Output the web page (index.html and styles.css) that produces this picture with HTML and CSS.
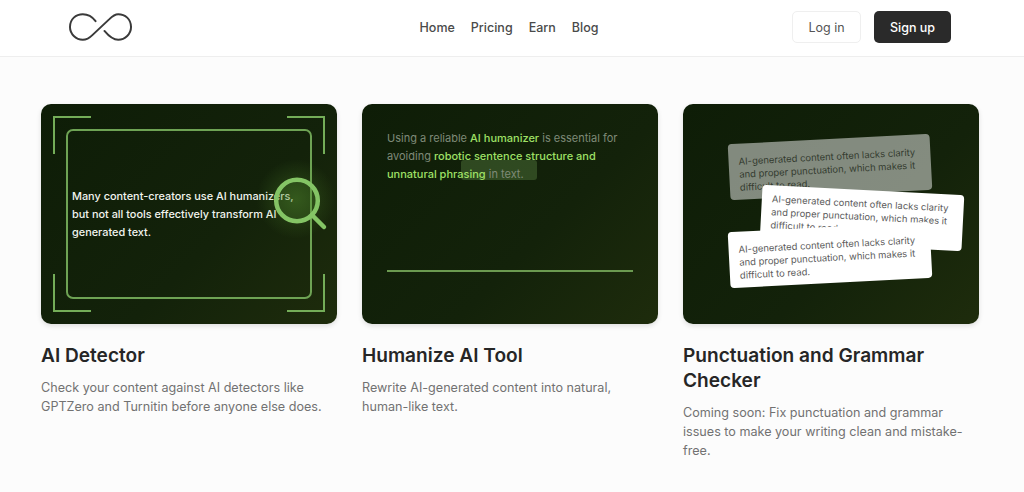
FILE: index.html
```html
<!DOCTYPE html>
<html lang="en">
<head>
<meta charset="utf-8">
<title>Tools</title>
<link rel="stylesheet" href="styles.css">
</head>
<body>
<header class="topbar">
  <a class="logo" href="#" aria-label="Home">
    <svg width="64" height="30" viewBox="0 0 65 30" fill="none" stroke="#3a3a3a" stroke-width="2" stroke-linecap="round" stroke-linejoin="round">
      <path d="M27 9 C24 5 19 2 14 2 C7 2 1 7 1 15 C1 22 7 28 14 28 C18 28 21 26 24 23 L41 7 C44 4 47 2 50 2 C57 2 63 7 63 15 C63 22 57 28 50 28 C45 28 41 25 36 19"/>
    </svg>
  </a>
  <nav class="nav">
    <a href="#">Home</a>
    <a href="#">Pricing</a>
    <a href="#">Earn</a>
    <a href="#">Blog</a>
  </nav>
  <div class="actions">
    <a class="btn btn-ghost" href="#">Log in</a>
    <a class="btn btn-dark" href="#">Sign up</a>
  </div>
</header>
<main class="cards">
  <article class="card">
    <div class="art art-detect">
      <span class="corner tl"></span><span class="corner tr"></span><span class="corner bl"></span><span class="corner br"></span>
      <div class="frame">
        <p class="detect-text">Many content-creators use AI humanizers, but not all tools effectively transform AI generated text.</p>
      </div>
      <span class="glow"></span>
      <svg class="lens" width="60" height="60" viewBox="0 0 60 60" fill="none" stroke="#84c465" stroke-linecap="round">
        <circle cx="25" cy="24.5" r="20.8" fill="#4f8a2e" fill-opacity="0.22" stroke-width="4.5"/>
        <path d="M40 39 L52 51" stroke-width="4.5"/>
      </svg>
    </div>
    <h2>AI Detector</h2>
    <p class="desc">Check your content against AI detectors like GPTZero and Turnitin before anyone else does.</p>
  </article>
  <article class="card">
    <div class="art art-human">
      <span class="mark"></span>
      <p class="human-text">Using a reliable <b>AI humanizer</b> is essential for avoiding <b>robotic sentence structure and unnatural phrasing</b> in text.</p>
      <span class="rule"></span>
    </div>
    <h2>Humanize AI Tool</h2>
    <p class="desc">Rewrite AI-generated content into natural, human-like text.</p>
  </article>
  <article class="card">
    <div class="art art-notes">
      <p class="note note-a">AI-generated content often lacks clarity and proper punctuation, which makes it difficult to read.</p>
      <p class="note note-b">AI-generated content often lacks clarity and proper punctuation, which makes it difficult to read.</p>
      <p class="note note-c">AI-generated content often lacks clarity and proper punctuation, which makes it difficult to read.</p>
    </div>
    <h2>Punctuation and Grammar Checker</h2>
    <p class="desc">Coming soon: Fix punctuation and grammar issues to make your writing clean and mistake-free.</p>
  </article>
</main>
</body>
</html>
```
FILE: styles.css
```css
* { box-sizing: border-box; }
html, body { margin: 0; height: 100%; }
body {
  background: #fcfcfc;
  font-family: Inter, "Liberation Sans", sans-serif;
  color: #262626;
  overflow: hidden;
}
a { text-decoration: none; color: inherit; }

.topbar {
  height: 57px;
  background: #fff;
  border-bottom: 1px solid #eeeeee;
  display: grid;
  grid-template-columns: 1fr auto 1fr;
  align-items: center;
  padding: 0 73px 2px 69px;
}
.logo { display: flex; justify-self: start; margin-top: -1px; }
.nav { display: flex; gap: 16px; font-size: 12.5px; color: #4a4a4a; font-weight: 500; margin-left: -2px; }
.actions { display: flex; gap: 13px; justify-self: end; }
.btn {
  height: 32px;
  display: flex;
  align-items: center;
  justify-content: center;
  border-radius: 5px;
  font-size: 12.5px;
}
.btn-ghost { width: 69px; border: 1px solid #efefef; color: #555; background: #fff; }
.btn-dark { width: 77px; background: #2a2a2a; color: #fff; font-weight: 500; }

.cards {
  display: grid;
  grid-template-columns: repeat(3, 1fr);
  gap: 25px;
  padding: 47px 45px 0 41px;
}
.card h2 {
  margin: 19px 0 0;
  font-size: 19.1px;
  line-height: 25px;
  font-weight: 600;
  color: #262626;
}
.desc {
  margin: 10px 0 0;
  font-size: 12.6px;
  line-height: 19px;
  color: #727272;
}

.art {
  position: relative;
  height: 220px;
  border-radius: 10px;
  overflow: hidden;
  background: linear-gradient(135deg, #0e1d07 0%, #13220a 60%, #1e2c0c 100%);
  box-shadow: 0 2px 5px rgba(0, 0, 0, 0.12);
}

.corner { position: absolute; width: 38px; height: 38px; border: 0 solid #74ad58; }
.tl { left: 12px; top: 12px; border-width: 2px 0 0 2px; }
.tr { right: 12px; top: 12px; border-width: 2px 2px 0 0; }
.bl { left: 12px; bottom: 12px; border-width: 0 0 2px 2px; }
.br { right: 12px; bottom: 12px; border-width: 0 2px 2px 0; }
.frame {
  position: absolute;
  left: 25px; top: 25px; right: 25px; bottom: 25px;
  border: 2px solid #6ea354;
  border-radius: 7px;
  display: flex;
  align-items: center;
  padding: 0 4px;
}
.detect-text { margin: 0; font-size: 10.9px; line-height: 18px; color: #f1f4ee; font-weight: 500; }
.glow {
  position: absolute;
  left: 215px; top: 55px;
  width: 80px; height: 80px;
  border-radius: 50%;
  background: radial-gradient(circle, rgba(90, 150, 50, 0.35), rgba(90, 150, 50, 0) 70%);
}
.lens { position: absolute; left: 231px; top: 72px; }

.human-text { position: absolute; left: 25px; right: 25px; top: 25px; margin: 0; font-size: 11px; line-height: 18px; color: #7f8a78; }
.human-text b { font-weight: 500; color: #9fe066; }
.mark { position: absolute; left: 99px; top: 56px; width: 76px; height: 20px; border-radius: 3px; background: rgba(120, 170, 90, 0.3); }
.rule { position: absolute; left: 25px; right: 25px; top: 166px; height: 1.5px; background: #6b9a50; }

.note {
  position: absolute;
  left: 46px;
  width: 202px;
  height: 56px;
  margin: 0;
  padding: 11px 10px 0;
  overflow: hidden;
  background: #fff;
  color: #5a5a5a;
  border-radius: 4px;
  font-size: 9.45px;
  line-height: 13px;
}
.note-a { top: 35px; transform: rotate(-3deg); opacity: 0.48; }
.note-b { left: 78px; top: 86px; transform: rotate(3deg); padding-top: 7px; }
.note-c { top: 123px; transform: rotate(-3deg); }
```
